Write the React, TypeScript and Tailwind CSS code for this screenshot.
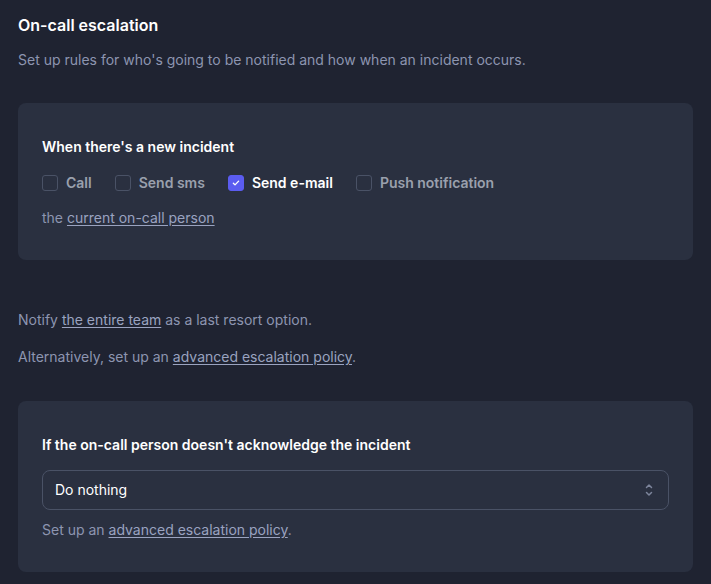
import { useState } from "react";

const options = [
  { id: "call", label: "Call" },
  { id: "sms", label: "Send sms" },
  { id: "email", label: "Send e-mail" },
  { id: "push", label: "Push notification" },
];

function Checkbox({
  label,
  checked,
  onChange,
}: {
  label: string;
  checked: boolean;
  onChange: () => void;
}) {
  return (
    <label className="flex items-center gap-2 cursor-pointer" onClick={onChange}>
      <span
        className={`h-4 w-4 rounded-[3px] flex items-center justify-center border ${
          checked ? "bg-[#5b5cf0] border-[#5b5cf0]" : "border-[#4a5266] bg-[#2a3040]"
        }`}
      >
        {checked && (
          <svg viewBox="0 0 16 16" className="h-3 w-3" fill="none">
            <path
              d="M4.5 8.3l2.2 2.2 4.8-5"
              stroke="white"
              strokeWidth="1.8"
              strokeLinecap="round"
              strokeLinejoin="round"
            />
          </svg>
        )}
      </span>
      <span
        className={`text-sm font-semibold leading-5 ${
          checked ? "text-white" : "text-[#9aa0ad]"
        }`}
      >
        {label}
      </span>
    </label>
  );
}

export default function App() {
  const [selected, setSelected] = useState<string[]>(["email"]);

  const toggle = (id: string) =>
    setSelected((s) => (s.includes(id) ? s.filter((x) => x !== id) : [...s, id]));

  return (
    <div
      className="min-h-screen bg-[#1f2331] px-[18px] pt-[13px] pb-4 text-[#8d95b0]"
      style={{ fontFamily: "Inter, 'Noto Sans', sans-serif" }}
    >
      <p className="text-base font-semibold leading-6 text-white">On-call escalation</p>
      <p className="mt-[13px] text-sm leading-5">
        Set up rules for who's going to be notified and how when an incident occurs.
      </p>

      {/* New incident */}
      <div className="mt-[33px] rounded-lg bg-[#2a3040] px-6 pt-8 pb-8">
        <p className="text-sm font-semibold leading-6 text-white">When there's a new incident</p>
        <div className="mt-[14px] flex items-center gap-[23px]">
          {options.map((o) => (
            <Checkbox
              key={o.id}
              label={o.label}
              checked={selected.includes(o.id)}
              onChange={() => toggle(o.id)}
            />
          ))}
        </div>
        <p className="mt-[15px] text-sm leading-5">
          the{" "}
          <a href="#" className="underline underline-offset-2 text-[#9aa3c0]">
            current on-call person
          </a>
        </p>
      </div>

      <p className="mt-[50px] text-sm leading-5">
        Notify{" "}
        <a href="#" className="underline underline-offset-2 text-[#9aa3c0]">
          the entire team
        </a>{" "}
        as a last resort option.
      </p>
      <p className="mt-[17px] text-sm leading-5">
        Alternatively, set up an{" "}
        <a href="#" className="underline underline-offset-2 text-[#9aa3c0]">
          advanced escalation policy
        </a>
        .
      </p>

      {/* Acknowledge */}
      <div className="mt-[34px] rounded-lg bg-[#2a3040] px-6 pt-8 pb-8">
        <p className="text-sm font-semibold leading-6 text-white">
          If the on-call person doesn't acknowledge the incident
        </p>
        <div className="mt-[13px] relative">
          <select className="h-10 w-full appearance-none rounded-lg border border-[#4a5266] bg-[#2a3040] px-3 text-sm text-white outline-none">
            <option>Do nothing</option>
            <option>Notify the entire team</option>
          </select>
          <svg
            viewBox="0 0 16 16"
            className="pointer-events-none absolute right-[12px] top-1/2 h-4 w-4 -translate-y-1/2"
            fill="none"
            stroke="#7d859c"
            strokeWidth="1.5"
            strokeLinecap="round"
            strokeLinejoin="round"
          >
            <path d="M5.5 5.5L8 3l2.5 2.5M5.5 10.5L8 13l2.5-2.5" />
          </svg>
        </div>
        <p className="mt-[10px] text-sm leading-5">
          Set up an{" "}
          <a href="#" className="underline underline-offset-2 text-[#9aa3c0]">
            advanced escalation policy
          </a>
          .
        </p>
      </div>
    </div>
  );
}
